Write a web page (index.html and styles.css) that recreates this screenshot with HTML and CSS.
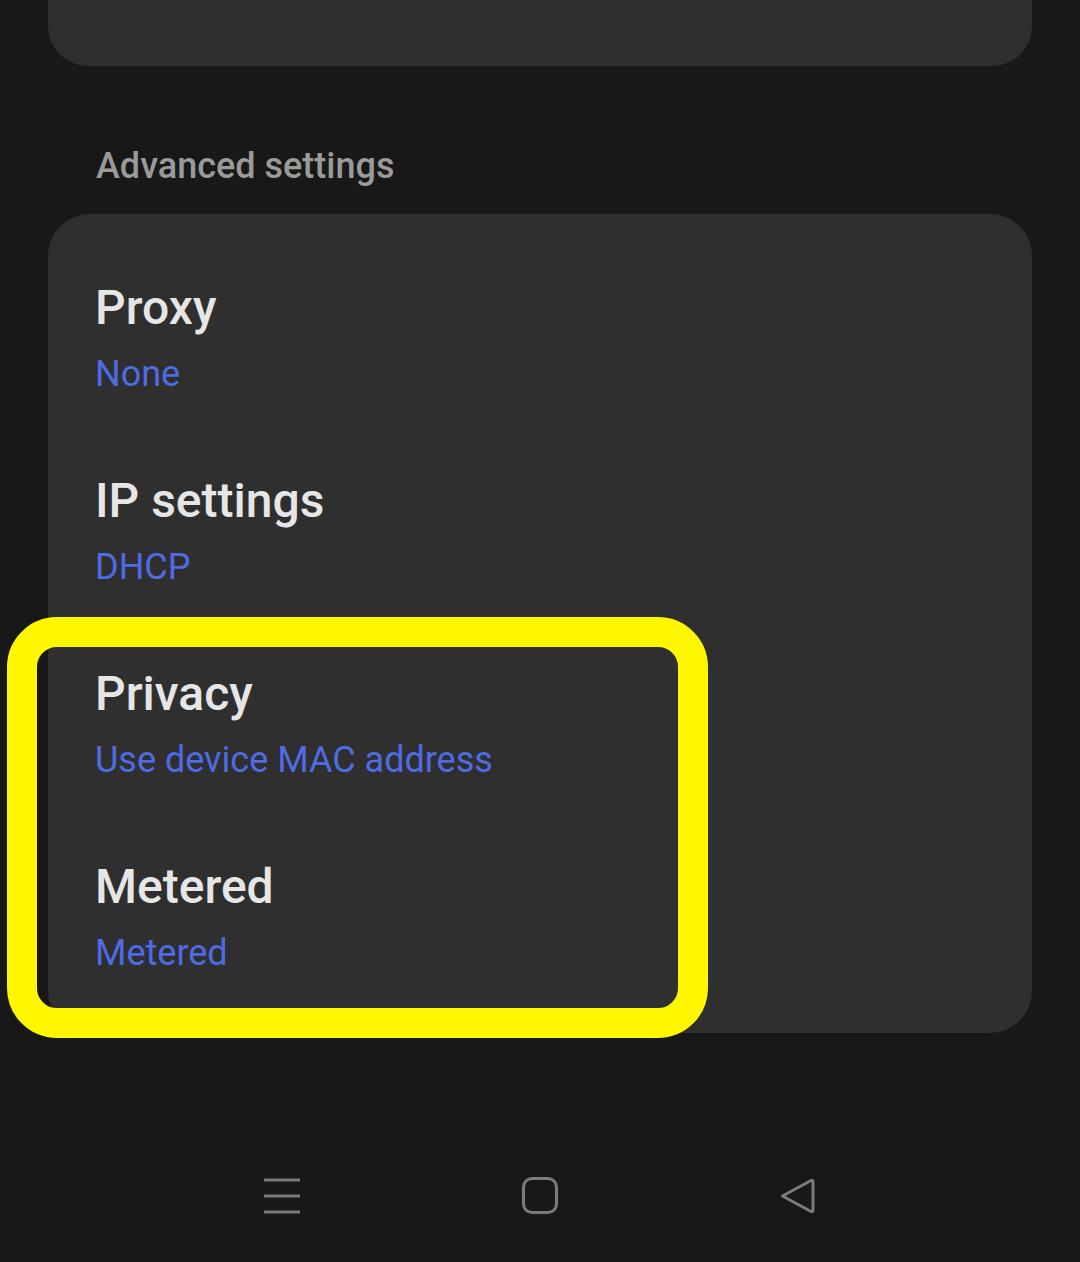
FILE: index.html
```html
<!DOCTYPE html>
<html lang="en">
<head>
<meta charset="utf-8">
<title>Advanced settings</title>
<link rel="stylesheet" href="styles.css">
</head>
<body>
<div class="page">
  <div class="card card-top"></div>

  <h2 class="section-header">Advanced settings</h2>

  <div class="card card-settings">
    <div class="row">
      <div class="row-title">Proxy</div>
      <div class="row-value">None</div>
    </div>
    <div class="row">
      <div class="row-title">IP settings</div>
      <div class="row-value">DHCP</div>
    </div>
    <div class="highlight-group">
      <div class="row">
        <div class="row-title">Privacy</div>
        <div class="row-value">Use device MAC address</div>
      </div>
      <div class="row">
        <div class="row-title">Metered</div>
        <div class="row-value">Metered</div>
      </div>
    </div>
  </div>

  <nav class="navbar">
    <div class="nav-slot">
      <svg class="nav-icon" width="40" height="40" viewBox="0 0 40 40">
        <path d="M2 4h36M2 20h36M2 36h36" fill="none" stroke="currentColor" stroke-width="3"/>
      </svg>
    </div>
    <div class="nav-slot">
      <svg class="nav-icon" width="40" height="40" viewBox="0 0 40 40">
        <rect x="3.5" y="2.5" width="33" height="34" rx="8.5" fill="none" stroke="currentColor" stroke-width="3"/>
      </svg>
    </div>
    <div class="nav-slot">
      <svg class="nav-icon" width="40" height="40" viewBox="0 0 40 40">
        <path d="M4.5 20 L33 4.5 Q35 3.5 35 6 L35 34 Q35 36.5 33 35.5 Z" fill="none" stroke="currentColor" stroke-width="3" stroke-linejoin="round"/>
      </svg>
    </div>
  </nav>
</div>
</body>
</html>
```

FILE: styles.css
```css
* {
  box-sizing: border-box;
}

html, body {
  margin: 0;
  padding: 0;
  background: #181818;
}

body {
  font-family: Roboto, "Noto Sans", "Liberation Sans", sans-serif;
}

.page {
  width: 1080px;
  min-height: 1262px;
  display: flex;
  flex-direction: column;
  overflow: hidden;
}

.card {
  margin: 0 48px;
  background: #2f2f2f;
}

.card-top {
  height: 66px;
  border-radius: 0 0 40px 40px;
}

.section-header {
  margin: 78px 0 26px 0;
  padding-left: 96px;
  font-size: 36px;
  line-height: 44px;
  font-weight: 500;
  color: #9a9a9a;
}

.card-settings {
  border-radius: 42px;
  padding: 33px 0 14px 0;
}

.row {
  padding: 33px 46px 44px 47px;
}

.row-title {
  font-size: 48px;
  line-height: 56px;
  font-weight: 500;
  color: #e6e6e6;
}

.row-value {
  margin-top: 16px;
  font-size: 36px;
  line-height: 44px;
  font-weight: 400;
  color: #4f6be4;
}

.highlight-group {
  position: relative;
}

.highlight-group::after {
  content: "";
  position: absolute;
  top: -16px;
  left: -41px;
  right: 324px;
  bottom: -19px;
  border: 30px solid #fff700;
  border-radius: 50px;
  pointer-events: none;
}

.navbar {
  margin-top: auto;
  height: 132px;
  display: grid;
  grid-template-columns: repeat(3, 258px);
  justify-content: center;
  align-items: center;
}

.nav-slot {
  display: flex;
  justify-content: center;
  align-items: center;
}

.nav-icon {
  display: block;
  color: #7a7a7a;
}
```
